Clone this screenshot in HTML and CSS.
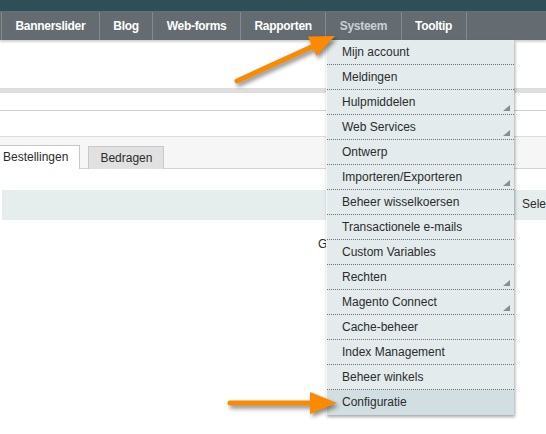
FILE: index.html
```html
<!DOCTYPE html>
<html>
<head>
<meta charset="utf-8">
<link rel="stylesheet" href="styles.css">
</head>
<body>
<div class="topbar"></div>
<nav class="nav">
  <span class="nav-item">Bannerslider</span>
  <span class="nav-item">Blog</span>
  <span class="nav-item">Web-forms</span>
  <span class="nav-item">Rapporten</span>
  <span class="nav-item active">Systeem</span>
  <span class="nav-item last">Tooltip</span>
</nav>
<main class="content">
  <div class="band"></div>
  <div class="rule"></div>
  <div class="tabbar">
    <span class="tab tab-active">Bestellingen</span>
    <span class="tab">Bedragen</span>
  </div>
  <div class="panel"><span class="sele">Selecteer</span></div>
  <div class="gline"><span class="g">G</span></div>
</main>

<ul class="menu">
  <li>Mijn account</li>
  <li>Meldingen</li>
  <li>Hulpmiddelen<i class="sub"></i></li>
  <li>Web Services<i class="sub"></i></li>
  <li>Ontwerp</li>
  <li>Importeren/Exporteren<i class="sub"></i></li>
  <li>Beheer wisselkoersen</li>
  <li>Transactionele e-mails</li>
  <li>Custom Variables</li>
  <li>Rechten<i class="sub"></i></li>
  <li>Magento Connect<i class="sub"></i></li>
  <li>Cache-beheer</li>
  <li>Index Management</li>
  <li>Beheer winkels</li>
  <li class="hover">Configuratie</li>
</ul>

<svg class="arrows" width="546" height="434" viewBox="0 0 546 434">
  <g class="arrow">
    <line x1="237" y1="81" x2="318" y2="44" stroke="#fb8a00" stroke-width="5" stroke-linecap="round"/>
    <polygon points="335,36 316.5,56 308,36.5" fill="#fb8a00"/>
  </g>
  <g class="arrow">
    <line x1="230" y1="403" x2="315" y2="403" stroke="#fb8a00" stroke-width="5" stroke-linecap="round"/>
    <polygon points="310,392 337,403 310,414" fill="#fb8a00"/>
  </g>
</svg>
</body>
</html>
```
FILE: styles.css
```css
html, body {
  margin: 0;
  padding: 0;
  background: #fff;
  font-family: "Liberation Sans", Arial, sans-serif;
  overflow: hidden;
  width: 546px;
  height: 434px;
}

.topbar {
  height: 11px;
  background: #2f4f58;
  border-bottom: 1px solid #5e737a;
}

.nav {
  display: flex;
  height: 28px;
  background: #646c71;
  padding-left: 1px;
  box-shadow: 0 2px 2px rgba(0, 0, 0, 0.18);
  position: relative;
}

.nav-item {
  display: block;
  line-height: 28px;
  padding: 0 13.5px;
  border-left: 1px solid #838b8f;
  color: #fff;
  font-size: 12px;
  font-weight: bold;
  letter-spacing: -0.3px;
  white-space: nowrap;
}

.nav-item.active {
  color: #c9d0d3;
}

.nav-item.last {
  border-right: 1px solid #838b8f;
}

.content {
  padding-top: 48px;
}

.band {
  height: 5px;
  background: #dedede;
}

.rule {
  height: 17px;
  border-bottom: 1px solid #cfcfcf;
}

.tabbar {
  margin-top: 25px;
  border-top: 1px solid #dcdcdc;
  background: #f6f6f6;
  height: 31px;
  border-bottom: 1px solid #d4d4d4;
  display: flex;
  align-items: flex-end;
  gap: 8px;
  padding-left: 0;
}

.tab {
  display: block;
  height: 22px;
  line-height: 22px;
  font-size: 12px;
  color: #2b2b2b;
  border: 1px solid #c8c8c8;
  border-bottom: none;
  background: #e1e1e1;
  padding: 0 11px;
  margin-bottom: -1px;
}

.tab-active {
  background: #fff;
  padding: 0 11px 0 3px;
  border-left: none;
  height: 23px;
}

.panel {
  margin-top: 21px;
  margin-left: 2px;
  height: 30px;
  background: #e5eded;
  position: relative;
}

.sele {
  position: absolute;
  left: 520px;
  top: 0;
  line-height: 28px;
  font-size: 12px;
  color: #2b2b2b;
}

.gline {
  height: 30px;
  position: relative;
}

.g {
  position: absolute;
  left: 318px;
  top: 17px;
  font-size: 12px;
  color: #2b2b2b;
}

.menu {
  position: absolute;
  left: 326px;
  top: 40px;
  width: 187px;
  margin: 0;
  padding: 0;
  list-style: none;
  background: #e3ebed;
  border-left: 1px solid #f4f7f8;
  box-shadow: 1px 2px 3px rgba(0, 0, 0, 0.35);
}

.menu li {
  position: relative;
  height: 24px;
  line-height: 25px;
  padding-left: 15px;
  font-size: 12px;
  color: #2b2b2b;
  border-bottom: 1px dotted #6f7374;
}

.menu li.hover {
  background: #d2dfe2;
  border-bottom: none;
  height: 25px;
}

.sub {
  position: absolute;
  right: 4px;
  bottom: 3px;
  width: 0;
  height: 0;
  border-left: 7px solid transparent;
  border-bottom: 6px solid #8a8d8e;
}

.arrows {
  position: absolute;
  left: 0;
  top: 0;
  pointer-events: none;
}

.arrow {
  filter: drop-shadow(2px 3px 2px rgba(0, 0, 0, 0.45));
}
```
